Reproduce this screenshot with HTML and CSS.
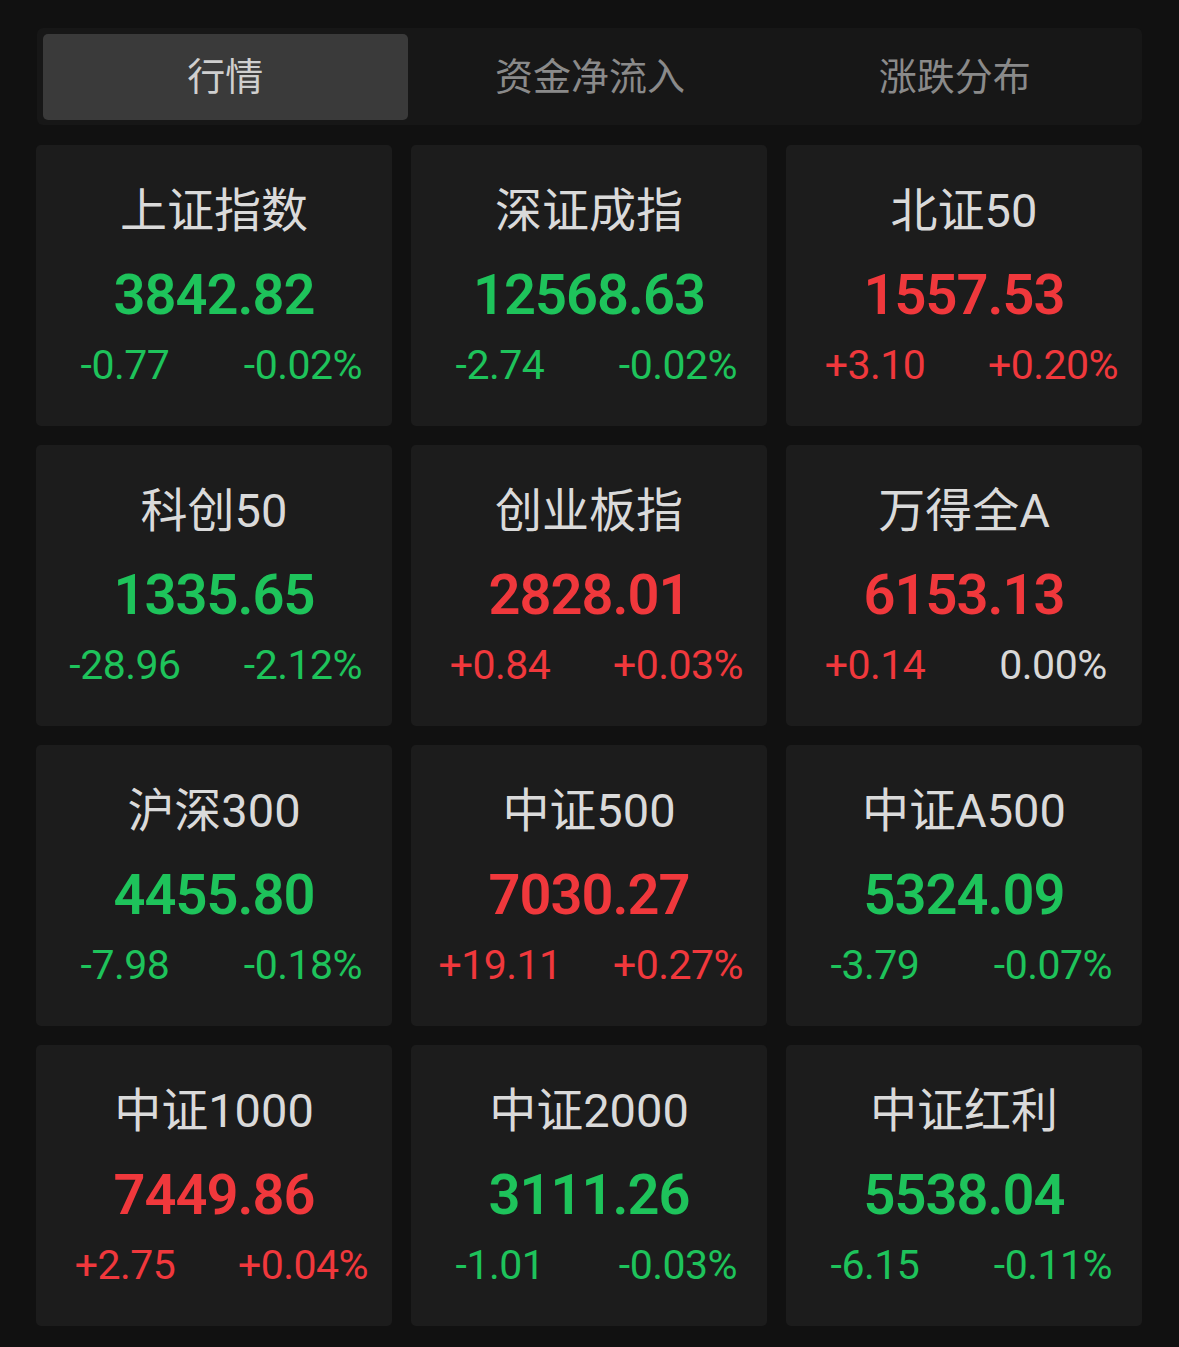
FILE: index.html
```html
<!DOCTYPE html>
<html lang="zh-CN">
<head>
    <meta charset="UTF-8">
    <meta name="viewport" content="width=device-width, initial-scale=1.0">
    <title>行情</title>
    <link rel="stylesheet" href="styles.css">
</head>
<body>
    <div class="tabs">
        <div class="tab active">行情</div>
        <div class="tab">资金净流入</div>
        <div class="tab">涨跌分布</div>
    </div>

    <div class="grid">
        <div class="card">
            <div class="name">上证指数</div>
            <div class="price down">3842.82</div>
            <div class="chg"><span class="down">-0.77</span><span class="down">-0.02%</span></div>
        </div>
        <div class="card">
            <div class="name">深证成指</div>
            <div class="price down">12568.63</div>
            <div class="chg"><span class="down">-2.74</span><span class="down">-0.02%</span></div>
        </div>
        <div class="card">
            <div class="name">北证50</div>
            <div class="price up">1557.53</div>
            <div class="chg"><span class="up">+3.10</span><span class="up">+0.20%</span></div>
        </div>

        <div class="card">
            <div class="name">科创50</div>
            <div class="price down">1335.65</div>
            <div class="chg"><span class="down">-28.96</span><span class="down">-2.12%</span></div>
        </div>
        <div class="card">
            <div class="name">创业板指</div>
            <div class="price up">2828.01</div>
            <div class="chg"><span class="up">+0.84</span><span class="up">+0.03%</span></div>
        </div>
        <div class="card">
            <div class="name">万得全A</div>
            <div class="price up">6153.13</div>
            <div class="chg"><span class="up">+0.14</span><span class="flat">0.00%</span></div>
        </div>

        <div class="card">
            <div class="name">沪深300</div>
            <div class="price down">4455.80</div>
            <div class="chg"><span class="down">-7.98</span><span class="down">-0.18%</span></div>
        </div>
        <div class="card">
            <div class="name">中证500</div>
            <div class="price up">7030.27</div>
            <div class="chg"><span class="up">+19.11</span><span class="up">+0.27%</span></div>
        </div>
        <div class="card">
            <div class="name">中证A500</div>
            <div class="price down">5324.09</div>
            <div class="chg"><span class="down">-3.79</span><span class="down">-0.07%</span></div>
        </div>

        <div class="card">
            <div class="name">中证1000</div>
            <div class="price up">7449.86</div>
            <div class="chg"><span class="up">+2.75</span><span class="up">+0.04%</span></div>
        </div>
        <div class="card">
            <div class="name">中证2000</div>
            <div class="price down">3111.26</div>
            <div class="chg"><span class="down">-1.01</span><span class="down">-0.03%</span></div>
        </div>
        <div class="card">
            <div class="name">中证红利</div>
            <div class="price down">5538.04</div>
            <div class="chg"><span class="down">-6.15</span><span class="down">-0.11%</span></div>
        </div>
    </div>
</body>
</html>
```

FILE: styles.css
```css
body {
    margin: 0;
    padding: 28px 37px 20px 36px;
    background-color: #111111;
    font-family: Roboto, "Noto Sans CJK SC", sans-serif;
    color: #dcdcdc;
}

/* barra de abas */
.tabs {
    display: grid;
    grid-template-columns: repeat(3, 1fr);
    padding: 6px 5px 5px 6px;
    margin-left: 1px;
    height: 86px;
    background-color: #171717;
    border-radius: 6px;
}

.tab {
    display: flex;
    align-items: center;
    justify-content: center;
    padding-bottom: 7px;
    font-family: "Noto Sans CJK SC", sans-serif;
    font-size: 38px;
    color: #8a8a8a;
    border-radius: 5px;
}

.tab.active {
    background-color: #3a3a3a;
    color: #cfcfcf;
}

/* cartões de índices */
.grid {
    display: grid;
    grid-template-columns: repeat(3, 1fr);
    column-gap: 19px;
    row-gap: 19px;
    margin-top: 20px;
}

.card {
    height: 281px;
    background-color: #1c1c1c;
    border-radius: 5px;
    display: flex;
    flex-direction: column;
    align-items: center;
    box-sizing: border-box;
    padding-top: 36px;
}

.name {
    font-size: 47px;
    line-height: 60px;
    color: #dadada;
}

.price {
    font-size: 56px;
    font-weight: 600;
    line-height: 66px;
    letter-spacing: -1px;
    margin-top: 21px;
}

.chg {
    display: grid;
    grid-template-columns: 1fr 1fr;
    width: 100%;
    margin-top: 13px;
    font-size: 41px;
    line-height: 48px;
    letter-spacing: -0.5px;
}

.chg span {
    text-align: center;
}

.up {
    color: #f0383c;
}

.down {
    color: #1ec35b;
}

.flat {
    color: #d8d8d8;
}
```
